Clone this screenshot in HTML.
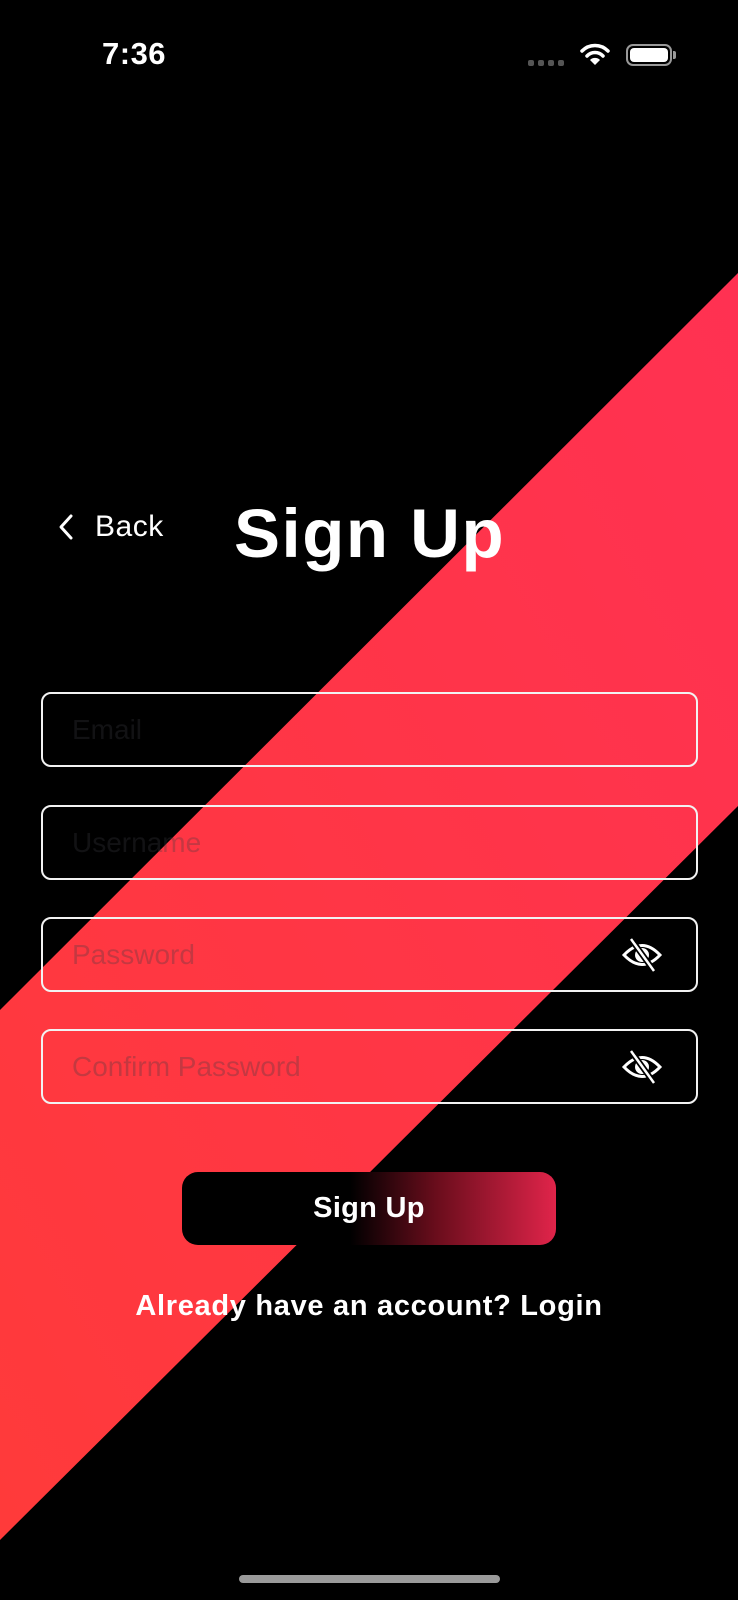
<!DOCTYPE html>
<html><head><meta charset="utf-8"><style>
*{margin:0;padding:0;box-sizing:border-box}
body{width:738px;height:1600px;background:#000;position:relative;overflow:hidden;font-family:"Liberation Sans",sans-serif;color:#fff}
.abs{position:absolute}
.field{position:absolute;left:41px;width:657px;height:75px;border:2px solid #f2f2f2;border-radius:10px}
.field span{position:absolute;left:29px;top:50%;transform:translateY(-50%);font-size:28px;color:rgba(60,60,67,0.3)}
.eye{position:absolute;right:33px;top:50%;transform:translateY(-50%)}
</style></head><body>
<svg class="abs" style="left:0;top:0" width="738" height="1600">
<defs><linearGradient id="g" x1="0" y1="1" x2="1" y2="0"><stop offset="0" stop-color="#ff3a3a"/><stop offset="1" stop-color="#ff3152"/></linearGradient></defs>
<polygon points="0,1010 738,273 738,806 0,1540" fill="url(#g)"/>
</svg>
<div class="abs" style="left:102px;top:36px;font-size:31px;font-weight:bold;letter-spacing:0.5px">7:36</div>
<div class="abs" style="left:528px;top:60px;width:38px;display:flex;gap:4px"><i style="width:6px;height:6px;border-radius:2px;background:#555"></i><i style="width:6px;height:6px;border-radius:2px;background:#555"></i><i style="width:6px;height:6px;border-radius:2px;background:#555"></i><i style="width:6px;height:6px;border-radius:2px;background:#555"></i></div>
<svg class="abs" style="left:580px;top:43px" width="30" height="23" viewBox="0 0 30 23"><path d="M2 8 A18 18 0 0 1 28 8" stroke="#fff" stroke-width="3.5" fill="none" stroke-linecap="round"/><path d="M7 13 A11 11 0 0 1 23 13" stroke="#fff" stroke-width="3.5" fill="none" stroke-linecap="round"/><path d="M15 22 L10 17 A7 7 0 0 1 20 17 Z" fill="#fff"/></svg>
<div class="abs" style="left:626px;top:44px;width:46px;height:22px;border:2px solid #999;border-radius:7px;padding:2px"><div style="width:100%;height:100%;background:#fff;border-radius:4px"></div></div>
<div class="abs" style="left:673px;top:51px;width:3px;height:8px;background:#999;border-radius:0 2px 2px 0"></div>
<svg class="abs" style="left:56px;top:513px" width="20" height="30"><path d="M15 3 L5 14 L15 25" stroke="#fff" stroke-width="3" fill="none" stroke-linecap="round" stroke-linejoin="round"/></svg>
<div class="abs" style="left:95px;top:510px;font-size:30px;letter-spacing:0.5px">Back</div>
<div class="abs" style="left:234px;top:494px;font-size:69px;font-weight:bold;letter-spacing:1.5px">Sign Up</div>
<div class="field" style="top:692px"><span>Email</span></div>
<div class="field" style="top:805px"><span>Username</span></div>
<div class="field" style="top:917px"><span>Password</span>
<svg class="eye" width="42" height="38" viewBox="0 0 42 38"><path d="M3 19 Q21 0 39 19 Q21 38 3 19Z" stroke="#fff" stroke-width="3" fill="none"/><circle cx="21" cy="19" r="7" fill="#fff"/><path d="M10 3 L33 35" stroke="#000" stroke-width="6"/><path d="M10 3 L33 35" stroke="#fff" stroke-width="2.5"/></svg></div>
<div class="field" style="top:1029px"><span>Confirm Password</span>
<svg class="eye" width="42" height="38" viewBox="0 0 42 38"><path d="M3 19 Q21 0 39 19 Q21 38 3 19Z" stroke="#fff" stroke-width="3" fill="none"/><circle cx="21" cy="19" r="7" fill="#fff"/><path d="M10 3 L33 35" stroke="#000" stroke-width="6"/><path d="M10 3 L33 35" stroke="#fff" stroke-width="2.5"/></svg></div>
<div class="abs" style="left:182px;top:1172px;width:374px;height:73px;border-radius:16px;background:linear-gradient(90deg,#000 0%,#000 45%,#6a0d1c 68%,#e0244a 100%);display:flex;align-items:center;justify-content:center;font-size:29px;font-weight:bold;letter-spacing:0.3px">Sign Up</div>
<div class="abs" style="left:0;width:738px;top:1290px;text-align:center;font-size:29px;font-weight:bold;letter-spacing:0.7px">Already have an account? Login</div>
<div class="abs" style="left:239px;top:1575px;width:261px;height:8px;border-radius:4px;background:#9a9a9a"></div>
</body></html>
